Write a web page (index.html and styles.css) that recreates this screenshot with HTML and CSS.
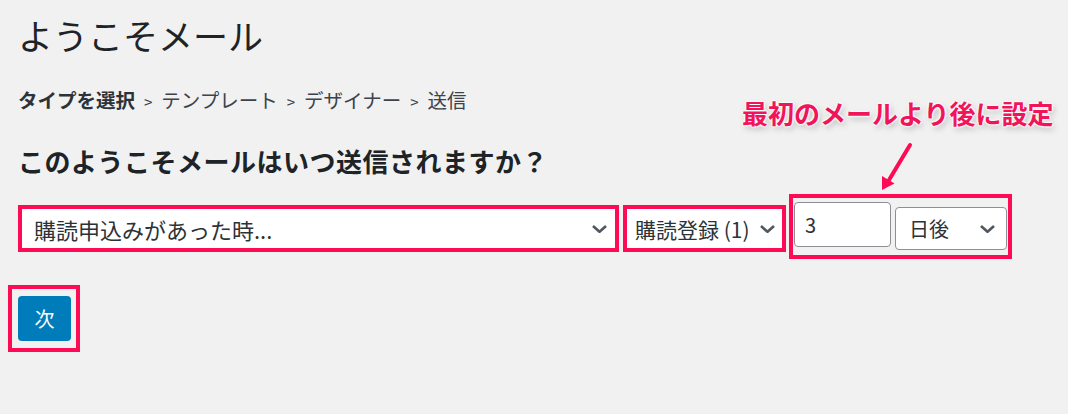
FILE: index.html
```html
<!DOCTYPE html>
<html lang="ja">

<head>
    <meta charset="UTF-8">
    <meta name="viewport" content="width=device-width, initial-scale=1.0">
    <title>ようこそメール</title>
    <link rel="stylesheet" href="styles.css">
</head>

<body>
    <div class="page">
        <h1>ようこそメール</h1>

        <div class="steps">
            <strong>タイプを選択</strong><span class="sep">&gt;</span>テンプレート<span class="sep">&gt;</span>デザイナー<span class="sep">&gt;</span>送信
        </div>

        <h2>このようこそメールはいつ送信されますか？</h2>

        <div class="controls">
            <div class="mark mark-event">
                <div class="field field-event">
                    <span>購読申込みがあった時...</span>
                    <svg class="chev" width="15" height="8" viewBox="0 0 15 8"><polyline points="1,1 7.5,6.8 14,1" /></svg>
                </div>
            </div>

            <div class="mark mark-list">
                <div class="field field-list">
                    <span>購読登録 (1)</span>
                    <svg class="chev" width="15" height="8" viewBox="0 0 15 8"><polyline points="1,1 7.5,6.8 14,1" /></svg>
                </div>
            </div>

            <div class="mark mark-delay">
                <div class="num">3</div>
                <div class="unit">
                    <span>日後</span>
                    <svg class="chev" width="15" height="8" viewBox="0 0 15 8"><polyline points="1,1 7.5,6.8 14,1" /></svg>
                </div>
            </div>
        </div>

        <div class="mark mark-next">
            <button type="button">次</button>
        </div>

        <!-- 注釈 -->
        <div class="note">最初のメールより後に設定</div>
        <svg class="arrow" width="50" height="55" viewBox="0 0 50 55">
            <line x1="40" y1="5" x2="19" y2="40" />
            <polygon points="12,50 24.5,43.5 12,36" />
        </svg>
    </div>
</body>

</html>
```

FILE: styles.css
```css
body {
    margin: 0;
    background: #f1f1f1;
    font-family: "Noto Sans CJK JP", "Noto Sans", sans-serif;
    color: #1d2327;
}

.page {
    position: relative;
    padding: 18px 18px 40px;
}

h1 {
    margin: 0;
    font-size: 35px;
    line-height: 34px;
    font-weight: 400;
}

.steps {
    margin-top: 38px;
    font-size: 19.5px;
    line-height: 19px;
    color: #3c434a;
}

.steps strong {
    color: #2c3338;
}

.sep {
    font-size: 15px;
    margin: 0 9px;
}

h2 {
    margin: 37px 0 0;
    font-size: 26px;
    line-height: 26px;
    font-weight: 700;
    letter-spacing: 0.5px;
}

.controls {
    margin-top: 20px;
    display: flex;
    align-items: flex-start;
}

.mark {
    box-sizing: border-box;
    border: 4px solid #fe0b55;
}

.mark-event {
    margin-top: 11px;
    width: 601px;
    height: 47px;
}

.mark-list {
    margin: 11px 0 0 4px;
    width: 163px;
    height: 47px;
}

.mark-delay {
    margin-left: 3px;
    width: 223px;
    height: 65px;
    display: flex;
    align-items: flex-start;
}

.field {
    height: 100%;
    background: #fff;
    display: flex;
    align-items: center;
    justify-content: space-between;
    font-size: 21px;
    color: #2c3338;
}

.field-event {
    font-size: 22px;
    padding: 0 8px 0 12px;
}

.field-list {
    padding: 0 7px 0 8px;
}

.chev polyline {
    fill: none;
    stroke: #50575e;
    stroke-width: 2.6;
}

.num,
.unit {
    box-sizing: border-box;
    background: #fff;
    border: 1px solid #8c8f94;
    border-radius: 4px;
    font-size: 20px;
    color: #2c3338;
}

.num {
    margin: 4px 0 0 1px;
    width: 97px;
    height: 45px;
    line-height: 43px;
    padding-left: 10px;
}

.unit {
    margin: 9px 0 0 4px;
    width: 112px;
    height: 43px;
    display: flex;
    align-items: center;
    justify-content: space-between;
    padding: 0 11px 0 13px;
}

.mark-next {
    margin: 26px 0 0 -10px;
    width: 72px;
    height: 67px;
    padding: 7px 5px 7px 6px;
}

button {
    width: 53px;
    height: 45px;
    border: none;
    border-radius: 4px;
    background: #007cba;
    color: #fff;
    font-family: inherit;
    font-size: 20px;
    padding: 0;
}

.note {
    position: absolute;
    left: 742px;
    top: 100px;
    font-size: 26px;
    line-height: 26px;
    font-weight: 700;
    color: #f0145a;
    white-space: nowrap;
    text-shadow: 0 0 2px #fff, 0 0 2px #fff, 0 0 3px #fff, 0 0 3px #fff, 2px 3px 6px rgba(0, 0, 0, 0.25);
}

.arrow {
    position: absolute;
    left: 870px;
    top: 140px;
}

.arrow line {
    stroke: #fe0b55;
    stroke-width: 4;
    stroke-linecap: round;
}

.arrow polygon {
    fill: #fe0b55;
}
```
